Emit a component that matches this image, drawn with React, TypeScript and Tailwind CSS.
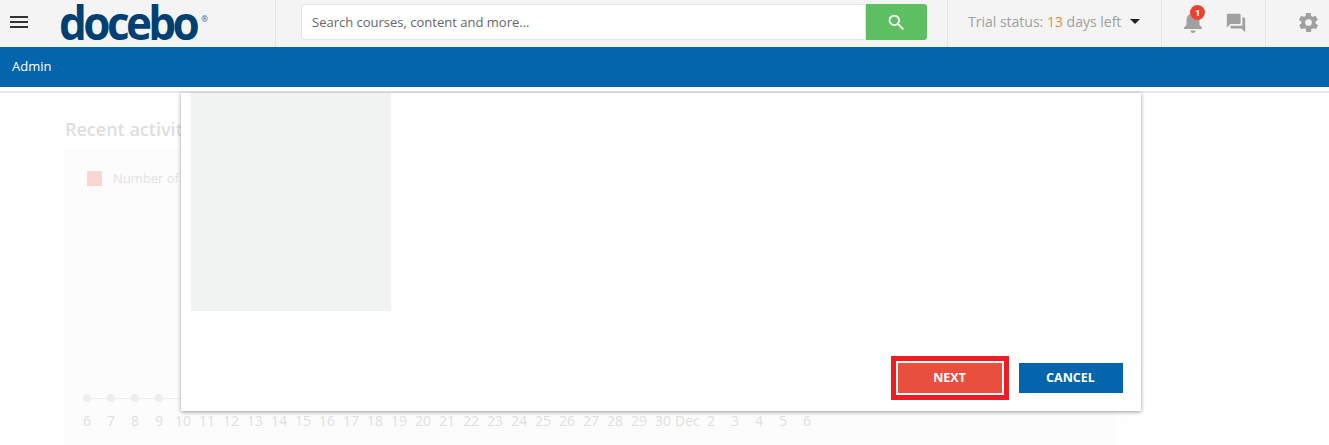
const dates = ['6', '7', '8', '9', '10', '11', '12', '13', '14', '15', '16', '17', '18', '19', '20', '21', '22', '23', '24', '25', '26', '27', '28', '29', '30', 'Dec', '2', '3', '4', '5', '6'];

function TopBar() {
  return (
    <header className="flex h-[47px] bg-[#f4f4f4]">
      <div className="flex w-[276px] shrink-0 items-center border-r border-[#e4e4e4]">
        <div className="mb-[4px] ml-[10px] flex w-[18px] flex-col gap-[3px]">
          <span className="h-[2px] bg-[#333]" />
          <span className="h-[2px] bg-[#333]" />
          <span className="h-[2px] bg-[#333]" />
        </div>
        <div className="ml-[31px] flex items-start">
          <span className="origin-bottom scale-y-[1.05] text-[44px] leading-[47px] font-bold tracking-[-3.6px] text-[#003f72]">docebo</span>
          <span className="mt-[14px] ml-[5px] text-[8px] leading-[10px] font-bold text-[#4a7ba3]">®</span>
        </div>
      </div>
      <div className="flex w-[672px] shrink-0 items-start border-r border-[#e4e4e4] pt-[4px] pl-[25px]">
        <div className="flex h-[36px] w-[626px]">
          <div className="flex w-[565px] items-center rounded-l-[3px] border border-[#e4e4e4] bg-white pt-[1px] pl-[10px] text-[13px] text-[#666]">
            Search courses, content and more...
          </div>
          <div className="flex w-[61px] items-center justify-center rounded-r-[3px] bg-[#5ebf62]">
            <svg width="21" height="21" viewBox="0 0 24 24" className="fill-white">
              <path d="M15.500 14h-.79l-.28-.27A6.470 6.470 0 0 0 16 9.500 6.500 6.500 0 1 0 9.500 16c1.610 0 3.090-.59 4.230-1.570l.27.28v.79l5 4.990L20.490 19l-4.990-5zm-6 0C7.010 14 5 11.990 5 9.500S7.010 5 9.500 5 14 7.010 14 9.500 11.990 14 9.500 14z" />
            </svg>
          </div>
        </div>
      </div>
      <div className="flex w-[214px] shrink-0 items-center border-r border-[#e4e4e4] pb-[5px] pl-[20px] text-[14px] text-[#a0a0a0]">
        <span>
          Trial status: <span className="text-[#ee8a3c]">13</span> days left
        </span>
        <span className="ml-[9px] h-0 w-0 border-x-[5px] border-t-[5px] border-x-transparent border-t-[#222]" />
      </div>
      <div className="flex w-[104px] shrink-0 items-center border-r border-[#e4e4e4] pb-[3px] pl-[19px]">
        <div className="relative">
          <svg width="24" height="24" viewBox="0 0 24 24" className="fill-[#a0a0a0]">
            <path d="M12 23c1.500 0 2.600-1 2.600-2.500H9.400C9.400 22 10.500 23 12 23zm9-5.500-2.500-2.500V10c0-3.200-1.900-5.700-4.800-6.500V2.500a1.700 1.700 0 0 0-3.400 0v1C7.400 4.300 5.500 6.800 5.500 10v5L3 17.500V19h18v-1.500z" />
          </svg>
          <span className="absolute top-[-5px] left-[9px] flex h-[15px] w-[15px] items-center justify-center rounded-full bg-[#ea4335] text-[9px] font-bold text-white">
            1
          </span>
        </div>
        <svg width="22" height="22" viewBox="0 0 24 24" className="mt-[1px] ml-[20px] fill-[#a0a0a0]">
          <path d="M21 6h-2v9H6v2c0 .6.4 1 1 1h11l4 4V7c0-.6-.4-1-1-1zm-4 6V3c0-.6-.4-1-1-1H3c-.6 0-1 .4-1 1v14l4-4h10c.6 0 1-.4 1-1z" />
        </svg>
      </div>
      <div className="flex flex-1 items-center pb-[3px] pl-[31px]">
        <svg width="23" height="23" viewBox="0 0 24 24" className="fill-[#a0a0a0]">
          <path d="M19.400 13c.1-.3.100-.7.100-1s0-.7-.1-1l2.100-1.600c.2-.1.200-.4.100-.6l-2-3.500c-.1-.2-.4-.3-.6-.2l-2.500 1c-.5-.4-1.100-.7-1.700-1l-.4-2.700c0-.2-.2-.4-.5-.4h-4c-.2 0-.5.200-.5.400l-.4 2.700c-.6.200-1.200.6-1.700 1l-2.500-1c-.2-.1-.5 0-.6.200l-2 3.500c-.1.200 0 .5.100.6L4.600 11c-.1.300-.1.700-.1 1s0 .7.100 1l-2.100 1.600c-.2.100-.2.400-.1.600l2 3.500c.1.200.4.300.6.200l2.500-1c.5.400 1.100.7 1.700 1l.4 2.700c0 .2.300.4.500.4h4c.3 0 .5-.2.500-.4l.4-2.700c.6-.2 1.200-.6 1.700-1l2.500 1c.2.100.5 0 .6-.2l2-3.500c.1-.2.100-.5-.1-.6L19.400 13zM12 15.500a3.500 3.500 0 1 1 0-7 3.500 3.500 0 0 1 0 7z" />
        </svg>
      </div>
    </header>
  );
}

function BackgroundPage() {
  return (
    <div className="ml-[45px] h-full w-[1090px] bg-[#fefefe] px-[20px] pt-[24px]">
      <h2 className="text-[18px] leading-[24px] font-semibold text-[#dedede]">Recent activity</h2>
      <div className="mt-[9px] h-[300px] w-[1050px] border-t border-[#f8f8f8] bg-[#fcfcfc] pl-[22px]">
        <div className="flex items-center pt-[18px]">
          <span className="h-[15px] w-[15px] bg-[#f9d6d4]" />
          <span className="ml-[11px] text-[13px] text-[#e2e2e2]">Number of</span>
        </div>
      </div>
    </div>
  );
}

function ChartAxis() {
  return (
    <div className="absolute top-[318px] left-[75px] flex text-[14px] leading-[20px] text-[#dfdfdf]">
      {dates.map((d, i) => (
        <span key={i} className="w-[24px] text-center">
          {d}
        </span>
      ))}
    </div>
  );
}

function ChartLine() {
  return (
    <div className="absolute top-[301px] left-[83px] flex h-[8px] w-[100px] items-center gap-[16px] bg-[linear-gradient(#eeeeee,#eeeeee)] bg-[length:100%_1px] bg-center bg-no-repeat">
      <span className="h-[8px] w-[8px] rounded-full bg-[#eeeeee]" />
      <span className="h-[8px] w-[8px] rounded-full bg-[#eeeeee]" />
      <span className="h-[8px] w-[8px] rounded-full bg-[#eeeeee]" />
      <span className="h-[8px] w-[8px] rounded-full bg-[#eeeeee]" />
    </div>
  );
}

function Modal() {
  return (
    <div className="absolute top-0 left-[181px] flex h-[318px] w-[960px] flex-col bg-white pr-[18px] pl-[10px] shadow-[0_1px_4px_rgba(0,0,0,0.4)]">
      <div className="h-[218px] w-[200px] bg-[#f1f3f3]" />
      <div className="flex flex-1 items-start justify-end pt-[45px]">
        <div className="border-[5px] border-[#ee1c25] bg-white p-[2px]">
          <button className="block h-[30px] w-[104px] bg-[#ea4e3d] pr-[1px] text-[12.5px] font-bold text-white">NEXT</button>
        </div>
        <button className="mt-[7px] ml-[10px] h-[30px] w-[104px] bg-[#0465ac] pr-[1px] text-[12.5px] font-bold text-white">CANCEL</button>
      </div>
    </div>
  );
}

export default function App() {
  return (
    <div className="h-[445px] overflow-hidden bg-white font-['Open_Sans',sans-serif]">
      <TopBar />
      <div className="flex h-[40px] items-center bg-[#0465ac] pl-[12px] text-[13px] text-white">Admin</div>
      <div className="h-[6px] border-b-2 border-[#e8e8e8]" />
      <main className="relative h-[352px]">
        <BackgroundPage />
        <ChartLine />
        <ChartAxis />
        <Modal />
      </main>
    </div>
  );
}
